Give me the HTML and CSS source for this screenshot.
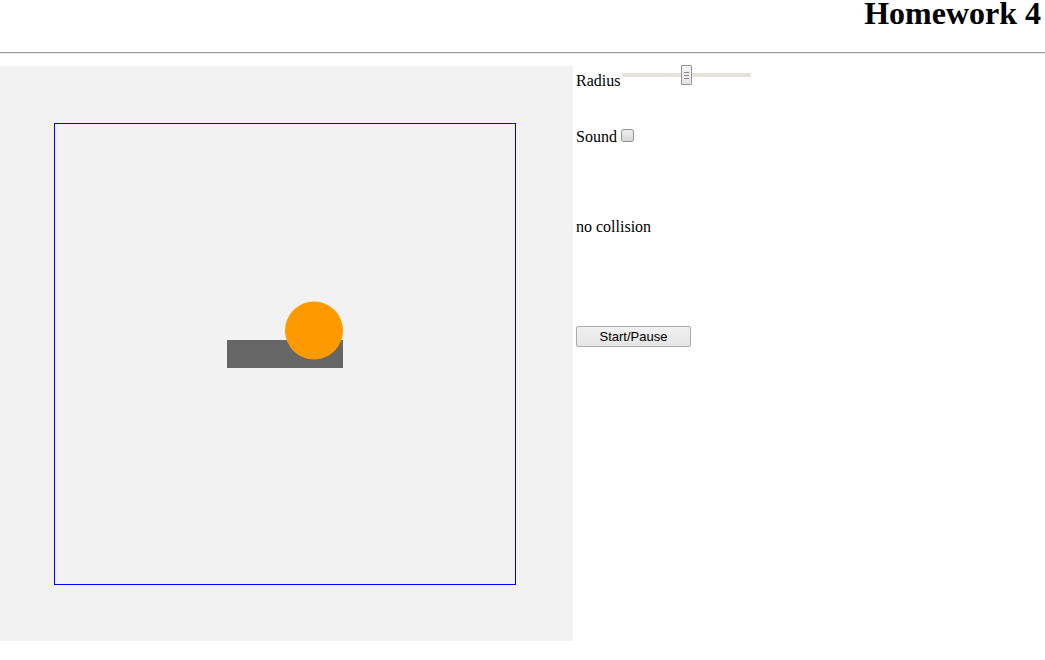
FILE: index.html
```html
<!DOCTYPE html>
<html>
<head>
<meta charset="utf-8">
<title>Homework 4</title>
<link rel="stylesheet" href="styles.css">
</head>
<body>
<h1 class="title">Homework 4</h1>
<hr class="rule">
<main class="main">
  <div class="canvas">
    <svg class="scene" viewBox="0 0 573 575" width="573" height="575">
      <rect x="54.5" y="57.5" width="461" height="461" fill="none" stroke="#0000ff" stroke-width="1"/>
      <rect x="227" y="274" width="116" height="28" fill="#666666"/>
      <circle cx="314" cy="264.5" r="29" fill="#ff9900"/>
    </svg>
  </div>
  <div class="controls">
    <div class="row row-radius">
      <span class="label label-radius">Radius</span>
      <input class="slider" type="range" min="0" max="100" value="50">
    </div>
    <div class="row row-sound">
      <span class="label">Sound</span>
      <input class="check" type="checkbox">
    </div>
    <div class="status">no collision</div>
    <button class="btn" type="button">Start/Pause</button>
  </div>
</main>
</body>
</html>
```
FILE: styles.css
```css
html, body {
  margin: 0;
  padding: 0;
  background: #ffffff;
}
body {
  font-family: "Liberation Serif", "Times New Roman", serif;
  font-size: 16px;
  color: #000;
}
.title {
  margin: 0;
  padding-right: 4px;
  text-align: right;
  font-size: 32px;
  font-weight: bold;
  line-height: 26px;
}
.rule {
  margin: 26px 0 12px 0;
  border: 0;
  border-top: 1px solid #9c9c9c;
  border-bottom: 1px solid #e6e6e6;
  height: 0;
}
.main {
  display: flex;
  align-items: flex-start;
  gap: 3px;
}
.canvas {
  width: 573px;
  height: 575px;
  background-color: #f2f2f2;
  flex: none;
}
.scene {
  display: block;
}
.controls {
  display: flex;
  flex-direction: column;
  align-items: flex-start;
}
.row {
  display: flex;
  align-items: flex-start;
}
.label {
  line-height: 20px;
}
.label-radius {
  padding-top: 5px;
}
.row-sound {
  margin-top: 36px;
}
.slider {
  -webkit-appearance: none;
  appearance: none;
  width: 129px;
  height: 20px;
  margin: -1px 0 0 2px;
  padding: 0;
  background: transparent;
}
.slider::-webkit-slider-runnable-track {
  height: 4px;
  background: #e5e1db;
  border: 0;
}
.slider::-webkit-slider-thumb {
  -webkit-appearance: none;
  appearance: none;
  width: 11px;
  height: 20px;
  margin-top: -8px;
  box-sizing: border-box;
  border: 1px solid #959595;
  border-radius: 1px;
  background:
    linear-gradient(to bottom,
      transparent 6px, #8a8a8a 6px, #8a8a8a 7px,
      transparent 7px, transparent 9px, #8a8a8a 9px, #8a8a8a 10px,
      transparent 10px, transparent 12px, #8a8a8a 12px, #8a8a8a 13px,
      transparent 13px) center / 5px 100% no-repeat,
    linear-gradient(#f4f4f4, #e3e3e3);
}
.check {
  -webkit-appearance: none;
  appearance: none;
  width: 13px;
  height: 13px;
  margin: 2px 0 0 4px;
  box-sizing: border-box;
  border: 1px solid #8f8f8f;
  border-radius: 3px;
  background: linear-gradient(#eeeeee, #d9d9d9);
}
.status {
  margin-top: 70px;
  line-height: 20px;
}
.btn {
  margin-top: 89px;
  width: 115px;
  height: 21px;
  padding: 0;
  box-sizing: border-box;
  font-family: "Liberation Sans", Arial, sans-serif;
  font-size: 13px;
  color: #000;
  border: 1px solid #acacac;
  border-radius: 2px;
  background: linear-gradient(#f0f0f0, #e5e5e5);
}
```
